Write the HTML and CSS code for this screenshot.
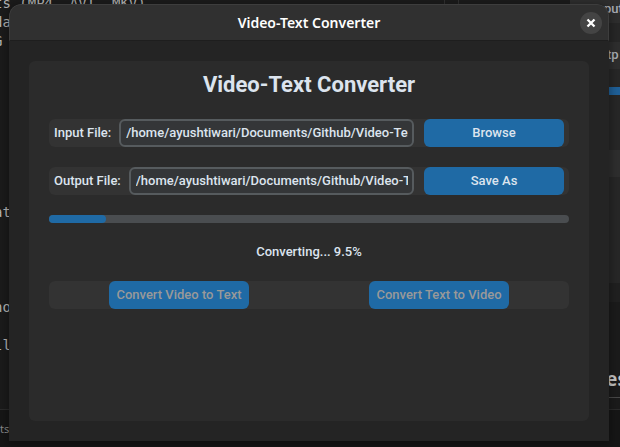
FILE: index.html
```html
<!DOCTYPE html>
<html lang="en">
<head>
<meta charset="utf-8">
<meta name="viewport" content="width=device-width, initial-scale=1">
<title>Video-Text Converter</title>
<link rel="stylesheet" href="styles.css">
</head>
<body>
<div class="desktop">
  <div class="backdrop" aria-hidden="true">
    <pre class="editor-text">ts (MP4, AVI, MKV)
da
G








at




no

ll</pre>
    <div class="editor-status">ts</div>
    <div class="other-tabs"></div>
    <div class="other-window">
      <div class="other-row other-row-first">put</div>
      <div class="other-row other-row-second">tp</div>
      <div class="other-bar"></div>
      <div class="other-row other-row-third"></div>
    </div>
    <div class="other-heading">es</div>
    <div class="other-rule"></div>
  </div>

  <main class="window">
    <header class="titlebar">
      <span class="titlebar-text">Video-Text Converter</span>
      <button class="close" type="button" aria-label="Close">
        <svg viewBox="0 0 10 10" width="10" height="10"><path d="M1.5 1.5 8.5 8.5M8.5 1.5 1.5 8.5" fill="none" stroke="#fff" stroke-width="2.3"/></svg>
      </button>
    </header>
    <div class="content">
      <form class="panel">
        <h1 class="heading">Video-Text Converter</h1>
        <div class="row">
          <label for="input-file">Input File:</label>
          <input class="entry" id="input-file" type="text" value="/home/ayushtiwari/Documents/Github/Video-Text-Converter">
          <button class="button" type="button">Browse</button>
        </div>
        <div class="row">
          <label for="output-file">Output File:</label>
          <input class="entry" id="output-file" type="text" value="/home/ayushtiwari/Documents/Github/Video-Text-Converter">
          <button class="button" type="button">Save As</button>
        </div>
        <div class="progress" role="progressbar" aria-labelledby="status" aria-valuemin="0" aria-valuemax="100" aria-valuenow="9.5">
          <div class="progress-fill" style="width: 11%"></div>
        </div>
        <p class="status" id="status">Converting... 9.5%</p>
        <div class="row actions">
          <button class="button" type="button" disabled>Convert Video to Text</button>
          <button class="button" type="button" disabled>Convert Text to Video</button>
        </div>
      </form>
    </div>
  </main>
</div>
</body>
</html>
```
FILE: styles.css
```css
* {
  box-sizing: border-box;
}

body {
  margin: 0;
  background: #1b1b1b;
  color: #dce4ee;
  font: 500 13px/28px Roboto, "Liberation Sans", sans-serif;
}

.desktop {
  position: relative;
  display: flex;
  min-height: 100vh;
  padding: 4px 11px 6px 9px;
  overflow: hidden;
}

/* Windows lying behind the converter */
.backdrop {
  position: absolute;
  inset: 0;
  overflow: hidden;
}

.editor-text {
  position: absolute;
  left: -6px;
  top: -6px;
  margin: 0;
  color: #b4b4b4;
  font: 14px/19px "DejaVu Sans Mono", monospace;
}

.editor-status {
  position: absolute;
  left: 0;
  right: 0;
  top: 409px;
  bottom: 0;
  border-top: 1px solid #2b2b2b;
  background: #161616;
  color: #8a8a8a;
  font: 11px/37px "Noto Sans", sans-serif;
}

.other-tabs {
  position: absolute;
  left: 444px;
  top: 0;
  width: 15px;
  height: 5px;
  border: solid #303030;
  border-width: 0 1px;
}

.other-window {
  position: absolute;
  right: 0;
  top: 0;
  width: 50px;
  height: 302px;
  border-bottom: 19px solid #202020;
  background: #272727;
}

.other-row {
  position: absolute;
  left: 0;
  right: 0;
  height: 27px;
  padding-left: 37px;
  background: #2e2e2e;
  color: #a9aeb5;
  line-height: 26px;
}

.other-row-first {
  top: -4px;
  padding-left: 34px;
}

.other-row-second {
  top: 42px;
}

.other-row-third {
  top: 150px;
}

.other-bar {
  position: absolute;
  left: 0;
  right: 0;
  top: 87px;
  height: 8px;
  background: #1f6098;
}

.other-heading {
  position: absolute;
  right: -7px;
  top: 365px;
  color: #c4c4c4;
  font: 700 19px/28px "Noto Sans", sans-serif;
}

.other-rule {
  position: absolute;
  right: 0;
  top: 397px;
  width: 30px;
  height: 1px;
  background: #484848;
}

/* Converter window */
.window {
  position: relative;
  display: flex;
  flex: 1;
  flex-direction: column;
  min-width: 0;
  overflow: hidden;
  border-radius: 12px 12px 0 0;
  background: #242424;
  box-shadow: 0 2px 8px 2px rgba(0, 0, 0, 0.3);
}

.titlebar {
  display: grid;
  grid-template-columns: 1fr auto 1fr;
  align-items: center;
  height: 37px;
  padding: 0 6px;
  border: 1px solid #3d3d3d;
  border-bottom-color: #1e1e1e;
  border-radius: 12px 12px 0 0;
  background: #303030;
}

.titlebar-text {
  grid-column: 2;
  color: #fff;
  font: 600 14px/20px "Noto Sans", sans-serif;
}

.close {
  display: flex;
  align-items: center;
  justify-content: center;
  justify-self: end;
  width: 22px;
  height: 22px;
  padding: 0;
  border: 0;
  border-radius: 50%;
  background: #444;
}

.content {
  display: flex;
  flex: 1;
  padding: 20px;
}

.panel {
  display: flex;
  flex: 1;
  flex-direction: column;
  gap: 20px;
  min-width: 0;
  padding: 10px 20px;
  border-radius: 6px;
  background: #2b2b2b;
}

.heading {
  margin: 0;
  font-size: 22px;
  font-weight: 700;
  line-height: 28px;
  text-align: center;
}

.row {
  display: flex;
  height: 28px;
  padding: 0 5px;
  border-radius: 6px;
  background: #333;
}

.entry {
  flex: 1;
  min-width: 0;
  height: 28px;
  margin: 0 10px 0 8px;
  padding: 0 4px 1px 5px;
  border: 2px solid #565b5e;
  border-radius: 6px;
  outline: 0;
  background: #343638;
  color: inherit;
  font: inherit;
  line-height: 22px;
}

.button {
  width: 140px;
  height: 28px;
  padding: 0;
  border: 0;
  border-radius: 6px;
  background: #1f6aa5;
  color: #dce4ee;
  font: inherit;
}

.button:disabled {
  color: #999;
}

.progress {
  height: 8px;
  border-radius: 4px;
  background: #4a4d50;
}

.progress-fill {
  height: 100%;
  border-radius: 4px;
  background: #1f6aa5;
}

.status {
  margin: 0;
  line-height: 18px;
  text-align: center;
}

.actions {
  display: grid;
  grid-template-columns: 1fr 1fr;
  justify-items: center;
  padding: 0;
}
```
